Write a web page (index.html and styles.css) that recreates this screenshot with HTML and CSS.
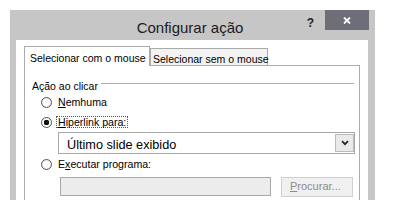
FILE: index.html
```html
<!DOCTYPE html>
<html lang="pt">
<head>
<meta charset="utf-8">
<title>Configurar ação</title>
<link rel="stylesheet" href="styles.css">
</head>
<body>
<div class="dialog">
  <div class="titlebar">
    <div class="title">Configurar ação</div>
    <div class="help">?</div>
    <div class="close">
      <svg width="8" height="7" viewBox="0 0 8 7"><path d="M1 0.5 L7 6.5 M7 0.5 L1 6.5" stroke="#fff" stroke-width="1.8" fill="none"/></svg>
    </div>
  </div>
  <div class="client">
    <div class="tabs">
      <div class="tab active">Selecionar com o mouse</div>
      <div class="tab">Selecionar sem o mouse</div>
    </div>
    <div class="panel">
      <div class="group-head"><span class="group-title">Ação ao clicar</span><span class="rule"></span></div>
      <div class="option"><span class="radio"></span><span class="label"><u>N</u>emhuma</span></div>
      <div class="option"><span class="radio checked"></span><span class="label focus"><u>H</u>iperlink para:</span></div>
      <div class="select">
        <span class="select-text">Último slide exibido</span>
        <span class="arrow"><svg width="8" height="6" viewBox="0 0 8 6"><path d="M1 1.2 L4 4.2 L7 1.2" stroke="#222" stroke-width="1.7" fill="none"/></svg></span>
      </div>
      <div class="option"><span class="radio"></span><span class="label">E<u>x</u>ecutar programa:</span></div>
      <div class="prog-row">
        <div class="input"></div>
        <div class="button"><u>P</u>rocurar...</div>
      </div>
    </div>
  </div>
</div>
</body>
</html>
```
FILE: styles.css
```css
body {
  margin: 0;
  background: #fff;
  font-family: "Liberation Sans", Arial, sans-serif;
  color: #000;
}

.dialog {
  margin: 10px 0 0 10px;
  width: 365px;
  height: 190px;
  background: #c6c6c6;
  display: flex;
  flex-direction: column;
  overflow: hidden;
}

.titlebar {
  flex: none;
  height: 30px;
  display: grid;
  grid-template-columns: 1fr auto auto;
  align-items: start;
}

.title {
  grid-column: 1 / -1;
  grid-row: 1;
  text-align: center;
  font-size: 15px;
  line-height: 17px;
  padding-top: 9px;
  padding-right: 5px;
  color: #1b1b1b;
}

.help {
  grid-column: 2;
  grid-row: 1;
  font-weight: bold;
  font-size: 12px;
  line-height: 14px;
  margin-top: 6px;
  margin-right: 11px;
  color: #222;
}

.close {
  grid-column: 3;
  grid-row: 1;
  width: 44px;
  height: 20px;
  margin-right: 6px;
  background: #6e6e78;
  display: flex;
  align-items: center;
  justify-content: center;
}

.close svg {
  display: block;
}

.client {
  flex: 1;
  min-height: 0;
  background: #fff;
  margin: 0 7px 0 6px;
  padding: 6px 8px 0 8px;
  display: flex;
  flex-direction: column;
}

.tabs {
  display: flex;
  align-items: flex-end;
  margin-bottom: -1px;
  position: relative;
  z-index: 1;
}

.tab {
  box-sizing: border-box;
  font-size: 10.5px;
  line-height: 12px;
  border: 1px solid #ababab;
  border-bottom: none;
  white-space: nowrap;
}

.tab.active {
  width: 126px;
  height: 20px;
  background: #fff;
  padding: 5px 0 0 5px;
}

.tab:not(.active) {
  width: 118px;
  height: 17px;
  margin-bottom: 1px;
  background: #f3f3f3;
  padding: 4px 0 0 2px;
}

.panel {
  flex: none;
  height: 200px;
  border: 1px solid #ababab;
  background: #fff;
  padding: 14px 5px 0 7px;
}

.group-head {
  display: flex;
  align-items: flex-start;
  height: 12px;
}

.group-title {
  font-size: 10.5px;
  line-height: 12px;
}

.rule {
  flex: 1;
  margin: 3px 0 0 3px;
  border-top: 1px solid #adadad;
  border-bottom: 1px solid #fff;
}

.option {
  display: flex;
  align-items: center;
  height: 20px;
  margin-left: 9px;
}

.radio {
  box-sizing: border-box;
  width: 11px;
  height: 11px;
  border-radius: 50%;
  border: 1px solid #555;
  background: radial-gradient(circle, #fff 0 40%, #d9d9d9 100%);
  flex: none;
}

.radio.checked {
  background: radial-gradient(circle, #111 0 2.6px, #fff 3px 3.6px, #d9d9d9 100%);
}

.label {
  margin-left: 4px;
  padding: 0 1px;
  border: 1px dotted transparent;
  font-size: 10.6px;
  line-height: 10px;
  white-space: nowrap;
}

.label.focus {
  border-color: #555;
}

.select {
  box-sizing: border-box;
  height: 22px;
  margin: 0 -1px 0 26px;
  border: 1px solid #a9a9a9;
  display: flex;
  align-items: stretch;
  padding: 1px 0 1px 8px;
}

.select-text {
  flex: 1;
  font-size: 12.7px;
  line-height: 20px;
  padding-top: 1px;
}

.arrow {
  box-sizing: border-box;
  width: 19px;
  border: 1px solid #bcbcbc;
  background: #e9e9e9;
  display: flex;
  align-items: center;
  justify-content: center;
}

.arrow svg {
  display: block;
}

.prog-row {
  display: flex;
  align-items: flex-start;
  margin: 3px 0 0 28px;
  gap: 10px;
}

.input {
  box-sizing: border-box;
  width: 211px;
  height: 19px;
  background: #ececec;
  border: 1px solid #a9a9a9;
}

.button {
  box-sizing: border-box;
  width: 72px;
  height: 20px;
  background: #f0f0f0;
  border: 1px solid #cfcfcf;
  color: #8c8c8c;
  font-size: 11px;
  line-height: 17px;
  padding-left: 8px;
}
```
